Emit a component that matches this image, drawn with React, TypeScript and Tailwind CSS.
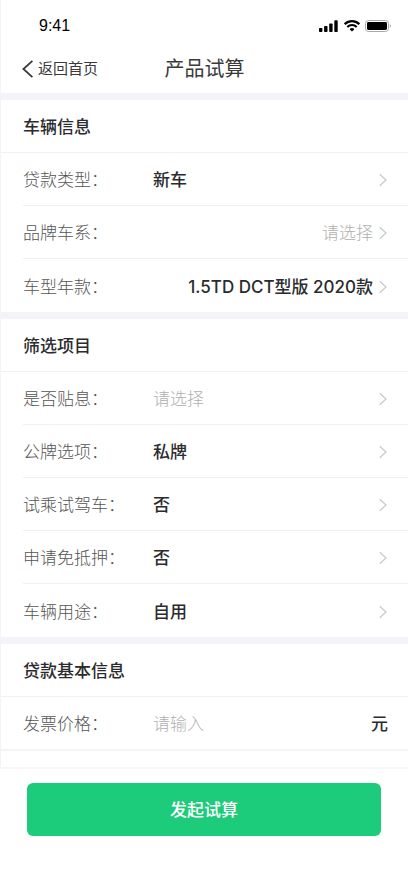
import { useId, useState } from 'react'
import clsx from 'clsx'

interface PickerRowProps {
  label: string
  options: string[]
  initial?: string
  align?: 'left' | 'right'
}

const years = ['1.5TD DCT型版 2020款', '1.5TD DCT型版 2019款']

function ChevronRight() {
  return (
    <svg
      className="pointer-events-none h-3.5 w-2 shrink-0 text-[#c8c8c8]"
      viewBox="0 0 8 14"
      fill="none"
      stroke="currentColor"
      strokeWidth="1.2"
      aria-hidden="true"
    >
      <path d="M0.8 1.2 7 7 0.8 12.8" />
    </svg>
  )
}

function PickerRow({ label, options, initial = '', align = 'left' }: PickerRowProps) {
  const id = useId()
  const [value, setValue] = useState(initial)

  return (
    <div className="ml-[22px] flex h-[53px] items-center border-b border-[#f1f1f3] pt-0.5 pr-[21px] last:border-b-0">
      <label
        htmlFor={id}
        className={clsx('shrink-0 font-light text-[#555]', align === 'left' ? 'w-[130px]' : 'w-[100px]')}
      >
        {label}：
      </label>
      <select
        id={id}
        value={value}
        onChange={(e) => setValue(e.target.value)}
        className={clsx(
          'h-full min-w-0 flex-1 appearance-none bg-transparent outline-none',
          align === 'right' && 'mr-[6px] text-right',
          value ? 'font-medium text-[#2b2b2d]' : 'font-light text-[#b0b0b0]',
        )}
      >
        <option value="">请选择</option>
        {options.map((option) => (
          <option key={option} value={option}>
            {option}
          </option>
        ))}
      </select>
      <ChevronRight />
    </div>
  )
}

function SectionTitle({ children }: { children: string }) {
  return (
    <h2 className="flex h-[53px] items-center border-b border-[#f1f1f3] pt-0.5 pl-[22px] font-medium text-[#2b2b2d]">
      {children}
    </h2>
  )
}

function StatusBar() {
  return (
    <div className="flex h-[42px] items-center justify-between pt-2.5 pr-[17px] pl-[38px] text-black">
      <span className="font-['Liberation_Sans',sans-serif] text-base">9:41</span>
      <div className="flex items-center gap-[5px]">
        <svg className="h-3 w-5" viewBox="0 0 20 12" fill="currentColor" aria-hidden="true">
          <rect x="0" y="8" width="3.4" height="4" rx="0.8" />
          <rect x="5.1" y="6" width="3.4" height="6" rx="0.8" />
          <rect x="10.2" y="3.5" width="3.4" height="8.5" rx="0.8" />
          <rect x="15.3" y="0.3" width="3.4" height="11.7" rx="0.8" />
        </svg>
        <svg className="h-3 w-4" viewBox="0 0 16 12" fill="none" stroke="currentColor" aria-hidden="true">
          <path d="M0.7 4.2a10.4 10.4 0 0 1 14.6 0" strokeWidth="2.2" />
          <path d="M3.3 7a6.7 6.7 0 0 1 9.4 0" strokeWidth="2.1" />
          <path d="M8 11.6 5.6 9.3a3.4 3.4 0 0 1 4.8 0Z" fill="currentColor" stroke="none" />
        </svg>
        <svg className="h-3 w-[26px]" viewBox="0 0 26 12" fill="none" aria-hidden="true">
          <rect x="0.5" y="0.5" width="23" height="11" rx="3" stroke="#a8a8a8" />
          <rect x="2" y="2" width="20" height="8" rx="1.4" fill="currentColor" />
          <path d="M24.8 4.2v3.6a2 2 0 0 0 0-3.6Z" fill="#a8a8a8" />
        </svg>
      </div>
    </div>
  )
}

export default function App() {
  const [price, setPrice] = useState('')

  return (
    <div
      lang="zh-CN"
      className="flex min-h-screen flex-col bg-white font-['Inter','Noto_Sans_CJK_SC',sans-serif] text-[17px] leading-6"
    >
      <div className="border-l border-[#f4f4f8]">
        <StatusBar />
        <header className="grid h-[51px] grid-cols-[1fr_auto_1fr] items-center px-[21px] pt-0.5 text-[#3a3a3a]">
          <button type="button" className="flex items-center gap-1 justify-self-start text-[15px]">
            <svg
              className="h-[18px] w-3"
              viewBox="0 0 12 18"
              fill="none"
              stroke="currentColor"
              strokeWidth="1.8"
              aria-hidden="true"
            >
              <path d="M10.4 0.8 1.4 9 10.4 17.2" />
            </svg>
            返回首页
          </button>
          <h1 className="text-xl">产品试算</h1>
        </header>

        <main>
          <section className="border-t-7 border-[#f4f4f8]">
            <SectionTitle>车辆信息</SectionTitle>
            <PickerRow label="贷款类型" options={['新车', '二手车']} initial="新车" />
            <PickerRow label="品牌车系" options={[]} align="right" />
            <PickerRow label="车型年款" options={years} initial={years[0]} align="right" />
          </section>

          <section className="border-t-7 border-[#f4f4f8]">
            <SectionTitle>筛选项目</SectionTitle>
            <PickerRow label="是否贴息" options={['是', '否']} />
            <PickerRow label="公牌选项" options={['私牌', '公牌']} initial="私牌" />
            <PickerRow label="试乘试驾车" options={['是', '否']} initial="否" />
            <PickerRow label="申请免抵押" options={['是', '否']} initial="否" />
            <PickerRow label="车辆用途" options={['自用', '营运']} initial="自用" />
          </section>

          <section className="border-t-7 border-[#f4f4f8]">
            <SectionTitle>贷款基本信息</SectionTitle>
            <div className="flex h-[54px] items-center border-b-2 border-[#f4f4f6] pt-0.5 pr-5 pl-[22px]">
              <label htmlFor="price" className="w-[130px] shrink-0 font-light text-[#555]">
                发票价格：
              </label>
              <input
                id="price"
                inputMode="decimal"
                placeholder="请输入"
                value={price}
                onChange={(e) => setPrice(e.target.value)}
                className="h-full min-w-0 flex-1 bg-transparent outline-none placeholder:font-light placeholder:text-[#b0b0b0]"
              />
              <span className="font-medium text-[#2b2b2d]">元</span>
            </div>
            <div className="h-4" />
          </section>
        </main>
      </div>

      <footer className="border-t-2 border-[#f6f6f6] px-[27px] pt-[14px] pb-12">
        <button
          type="button"
          className="h-[53px] w-full rounded-md bg-[#1dcc7a] font-medium text-white"
        >
          发起试算
        </button>
      </footer>
    </div>
  )
}
